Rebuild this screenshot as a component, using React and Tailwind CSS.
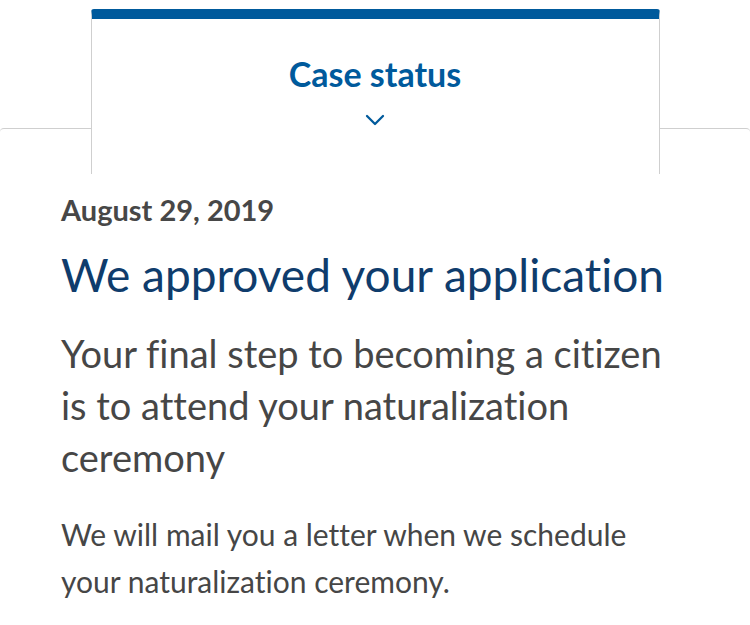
import React from 'react';

export default function App() {
  return (
    <div className="w-[750px] h-[625px] bg-white overflow-hidden [font-variant-ligatures:none]" style={{ fontFamily: 'Lato, "Open Sans", sans-serif' }}>
      <div className="pt-[9px]">
        {/* Tab */}
        <div className="relative z-10 mx-auto w-[569px] h-[165px] bg-white border-x border-[#cfcfcf] border-t-[10px] border-t-[#005a9c] rounded-t-[3px] flex flex-col items-center">
          <h1 className="mt-[38px] text-[34px] font-bold text-[#005a9c] leading-none">Case status</h1>
          <svg className="mt-[22px]" width="20" height="14" viewBox="0 0 20 14" fill="none">
            <path d="M2 3 L10 11 L18 3" stroke="#005a9c" strokeWidth="2.3" strokeLinecap="round" strokeLinejoin="round" />
          </svg>
        </div>

        {/* Panel */}
        <div className="-mt-[46px] border-t border-[#cfcfcf] rounded-t-[4px] px-[61px] pt-[65px]">
          <p className="text-[29px] font-bold text-[#474747] leading-[32px]">August 29, 2019</p>
          <h2 className="mt-[23px] text-[46px] text-[#0f3c6c] leading-[52px] whitespace-nowrap">We approved your application</h2>
          <p className="mt-[26px] text-[38px] text-[#464646] leading-[52px] whitespace-nowrap">
            Your final step to becoming a citizen<br />
            is to attend your naturalization<br />
            ceremony
          </p>
          <p className="mt-[28px] text-[30px] text-[#464646] leading-[47px] whitespace-nowrap">
            We will mail you a letter when we schedule<br />
            your naturalization ceremony.
          </p>
        </div>
      </div>
    </div>
  );
}
